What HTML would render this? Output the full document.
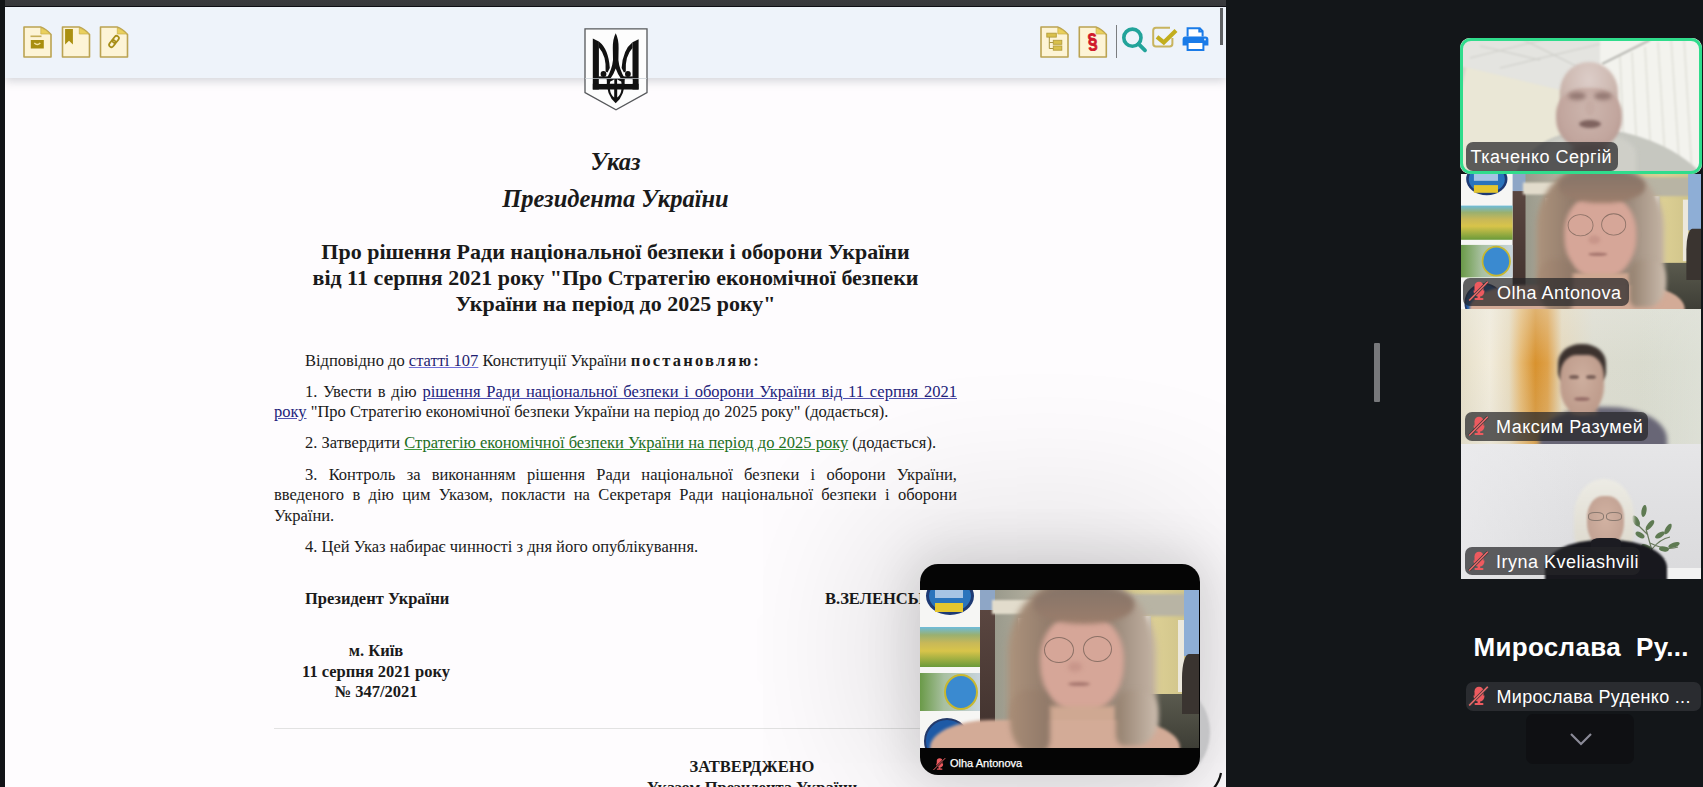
<!DOCTYPE html>
<html><head><meta charset="utf-8">
<style>
*{box-sizing:border-box;margin:0;padding:0}
html,body{width:1703px;height:787px;overflow:hidden;background:#131619;font-family:"Liberation Sans",sans-serif}
.abs{position:absolute}
#topbar{left:0;top:0;width:1226px;height:7px;background:linear-gradient(180deg,#3a3b3e 0,#37383b 5.5px,#101016 6px,#0c0c12 7px)}
#leftstrip{left:0;top:0;width:5px;height:787px;background:#121417}
#doc{left:5px;top:7px;width:1221px;height:780px;background:#fefcfe;overflow:hidden}
#toolbar{left:0;top:0;width:1221px;height:71px;background:#eef3fa;box-shadow:0 3px 9px rgba(120,130,140,.32)}
.serif{font-family:"Liberation Serif",serif;color:#1a1a1a}
.t{position:absolute;white-space:nowrap}
#scroll{left:1215px;top:1px;width:3px;height:37px;background:#5d5f62}

.it{font-style:italic;font-weight:bold;font-size:24.5px;line-height:30px}
.ti{font-weight:bold;font-size:22px;line-height:26px}
.bd{font-size:16.5px;line-height:20px}
.b{font-weight:bold}
.j{text-align:justify;text-align-last:justify;white-space:normal}
.sp{letter-spacing:2.2px}
.l1{color:#1e1e70;text-decoration:underline;text-decoration-color:#7070d8}
.l2{color:#22227a;text-decoration:underline;text-decoration-color:#5050b0}
.l3{color:#1d6e1d;text-decoration:underline;text-decoration-color:#3c9a3c}

.tile{position:absolute;overflow:hidden}
.tile div{position:absolute}
.bl{filter:blur(2px)}
.lab{position:absolute;background:rgba(38,38,40,.72);border-radius:7px;color:#fff;font-family:"Liberation Sans",sans-serif;font-size:18px;line-height:28px;padding-top:1px;white-space:nowrap;letter-spacing:.5px}
.mic{position:absolute}
</style></head><body>
<div id="topbar" class="abs"></div>
<div id="leftstrip" class="abs"></div>
<div id="doc" class="abs">
  <div id="toolbar" class="abs"></div>
  <div id="scroll" class="abs"></div>
</div>
<div id="icons"><svg class="abs" style="left:0;top:0" width="1231" height="80" viewBox="0 0 1231 80"><g transform="translate(23,26)">
<path d="M1,1 H17.6 Q23,2.8 28,8.6 V31 H1 Z" fill="#fdf4d6" stroke="#bba352" stroke-width="1.6" stroke-linejoin="round"/>
<path d="M17.8,1.8 V8 H27.2 Q23,3.4 17.8,1.8 Z" fill="#ead05c" stroke="#c9b04a" stroke-width="0.7"/>
<rect x="7.5" y="9.5" width="11" height="1.6" fill="#b89e3a" opacity=".8"/>
<rect x="7.8" y="14" width="13" height="8.5" fill="#a88e10"/>
<path d="M11.3,17 Q14.3,20 17.3,17" stroke="#f4e3a0" stroke-width="1.4" fill="none"/></g><g transform="translate(61.5,26)">
<path d="M1,1 H17.6 Q23,2.8 28,8.6 V31 H1 Z" fill="#fdf4d6" stroke="#bba352" stroke-width="1.6" stroke-linejoin="round"/>
<path d="M17.8,1.8 V8 H27.2 Q23,3.4 17.8,1.8 Z" fill="#ead05c" stroke="#c9b04a" stroke-width="0.7"/>
<path d="M3.6,3 H11.4 V18.6 L7.5,14.8 L3.6,18.6 Z" fill="#ab9010"/></g><g transform="translate(99.5,26)">
<path d="M1,1 H17.6 Q23,2.8 28,8.6 V31 H1 Z" fill="#fdf4d6" stroke="#bba352" stroke-width="1.6" stroke-linejoin="round"/>
<path d="M17.8,1.8 V8 H27.2 Q23,3.4 17.8,1.8 Z" fill="#ead05c" stroke="#c9b04a" stroke-width="0.7"/>
<g transform="rotate(-52 14.5 15.5)" fill="none" stroke="#a88e18" stroke-width="1.7">
<rect x="8" y="13.2" width="7.6" height="4.6" rx="2.3"/><rect x="13.4" y="13.2" width="7.6" height="4.6" rx="2.3"/></g></g><g transform="translate(1040,26)">
<path d="M1,1 H17.6 Q23,2.8 28,8.6 V31 H1 Z" fill="#fdf4d6" stroke="#bba352" stroke-width="1.6" stroke-linejoin="round"/>
<path d="M17.8,1.8 V8 H27.2 Q23,3.4 17.8,1.8 Z" fill="#ead05c" stroke="#c9b04a" stroke-width="0.7"/>
<rect x="6.8" y="7.2" width="9.5" height="3.9" fill="#d9c04a" stroke="#b59d3c" stroke-width="0.9"/>
<path d="M9.3,11 V22.5 H13.5 M9.3,16.5 H13.5" stroke="#a89440" stroke-width="1" fill="none"/>
<rect x="13.3" y="14.3" width="8.5" height="4" fill="#d9c04a" stroke="#b59d3c" stroke-width="0.9"/>
<rect x="13.3" y="20" width="8.5" height="4.2" fill="#d9c04a" stroke="#b59d3c" stroke-width="0.9"/></g><g transform="translate(1078.3,26)">
<path d="M1,1 H17.6 Q23,2.8 28,8.6 V31 H1 Z" fill="#fdf4d6" stroke="#bba352" stroke-width="1.6" stroke-linejoin="round"/>
<path d="M17.8,1.8 V8 H27.2 Q23,3.4 17.8,1.8 Z" fill="#ead05c" stroke="#c9b04a" stroke-width="0.7"/>
<g transform="translate(14.3 16) rotate(-6) scale(0.9 1.12)"><text x="0" y="5.6" font-family="Liberation Sans" font-weight="bold" font-size="19" fill="#d0182a" stroke="#d0182a" stroke-width="0.7" text-anchor="middle">§</text></g></g><rect x="1116" y="25" width="1" height="33" fill="#7b7d80"/><circle cx="1132.4" cy="37.7" r="8.6" fill="none" stroke="#22a39a" stroke-width="3.6"/><path d="M1138.5,43.8 L1145,50.3" stroke="#22a39a" stroke-width="3.8" stroke-linecap="round"/><path d="M1170,27.8 H1156 Q1153.2,27.8 1153.2,30.6 V43.8 Q1153.2,46.6 1156,46.6 H1169.6 Q1172.4,46.6 1172.4,43.8 V38" fill="none" stroke="#c8b45e" stroke-width="2"/><path d="M1157,36.8 L1163.8,42.4 L1176,30.6" fill="none" stroke="#c2ae1e" stroke-width="4.2" stroke-linejoin="miter"/><path d="M1187.6,36.5 V28.3 H1199.8 L1202.6,31.1 V36.5" fill="#fff" stroke="#1a7be8" stroke-width="2"/>
<path d="M1199.3,28 V31.6 H1203" fill="none" stroke="#1a7be8" stroke-width="2"/>
<path d="M1185.4,36.4 H1205.4 Q1208.4,36.4 1208.4,39.4 V45.6 H1203.6 V43 H1187.6 V45.6 H1182.6 V39.4 Q1182.6,36.4 1185.4,36.4 Z" fill="#1a7be8"/>
<path d="M1187.6,43 V50 H1203.4 V43" fill="#fff" stroke="#1a7be8" stroke-width="2"/>
<circle cx="1205" cy="39.5" r="0.9" fill="#e6f0ff"/></svg></div>
<div id="arms"><svg class="abs" style="left:578px;top:22px" width="76" height="94" viewBox="0 0 76 94">
<path d="M7,6.8 H69 V70.5 L38,87.8 L7,70.5 Z" fill="#fdfdfd" stroke="#56585b" stroke-width="1.3"/>
<g fill="#111">
<path d="M14.8,16.6 L20.9,19.6 V67.5 H14.8 Z"/>
<path d="M60.6,17.2 L54.5,20.2 V67.5 H60.6 Z"/>
<rect x="14.8" y="61.8" width="45.8" height="5.7"/>
<path d="M37.7,11.3 Q40.7,17 40.6,26 L40.4,38 Q41.3,47 46.5,56 L43.5,57.5 Q39.5,52 37.7,46.5 Q35.9,52 31.9,57.5 L28.9,56 Q34.1,47 35,38 L34.8,26 Q34.7,17 37.7,11.3 Z"/>
<path d="M20.9,19.6 Q30.5,27 31.8,46 L29.5,50.5 L27.6,49.5 Q28.6,34 20.9,25.5 Z"/>
<path d="M54.5,20.2 Q44.9,27.6 43.6,46 L45.9,50.5 L47.8,49.5 Q46.8,34 54.5,26 Z"/>
<circle cx="25.5" cy="52" r="2.9"/><circle cx="49.9" cy="52" r="2.9"/>
<rect x="20.5" y="54.4" width="10" height="2.9"/><rect x="44.9" y="54.4" width="10" height="2.9"/>
<path d="M28.6,56 H46.8 Q47.5,73 37.7,81.3 Q27.9,73 28.6,56 Z"/>
</g>
<g fill="#fdfdfd">
<path d="M32.2,59.5 Q34.5,58.7 36.3,57.2 V61.8 H31.8 Z"/>
<path d="M43.2,59.5 Q40.9,58.7 39.1,57.2 V61.8 H43.6 Z"/>
<path d="M32,67.5 H36.2 V75.5 Q32.4,72.5 32,67.5 Z"/>
<path d="M43.4,67.5 H39.2 V75.5 Q43,72.5 43.4,67.5 Z"/>
<rect x="20.9" y="57.3" width="7.5" height="4.5"/>
<rect x="47" y="57.3" width="7.5" height="4.5"/>
</g>
<rect x="7" y="56" width="62" height="0.9" fill="#c8ced4" opacity=".8"/>
</svg></div>
<div id="content" class="serif abs" style="left:0;top:0;width:1231px;height:787px">
<div class="t it" style="left:0;width:1231px;text-align:center;top:147px">Указ</div>
<div class="t it" style="left:0;width:1231px;text-align:center;top:183.5px">Президента України</div>
<div class="t ti" style="left:0;width:1231px;text-align:center;top:238.6px">Про рішення Ради національної безпеки і оборони України</div>
<div class="t ti" style="left:0;width:1231px;text-align:center;top:264.6px">від 11 серпня 2021 року "Про Стратегію економічної безпеки</div>
<div class="t ti" style="left:0;width:1231px;text-align:center;top:290.6px">України на період до 2025 року"</div>

<div class="t bd" style="left:305px;top:351px">Відповідно до <span class="l1">статті 107</span> Конституції України <b class="sp">постановляю:</b></div>
<div class="t bd j" style="left:305px;width:652px;top:382px">1. Увести в дію <span class="l2">рішення Ради національної безпеки і оборони України від 11 серпня 2021</span></div>
<div class="t bd" style="left:274px;top:402px"><span class="l2">року</span> "Про Стратегію економічної безпеки України на період до 2025 року" (додається).</div>
<div class="t bd" style="left:305px;top:433px">2. Затвердити <span class="l3">Стратегію економічної безпеки України на період до 2025 року</span> (додається).</div>
<div class="t bd j" style="left:305px;width:652px;top:465px">3. Контроль за виконанням рішення Ради національної безпеки і оборони України,</div>
<div class="t bd j" style="left:274px;width:683px;top:485px">введеного в дію цим Указом, покласти на Секретаря Ради національної безпеки і оборони</div>
<div class="t bd" style="left:274px;top:505.5px">України.</div>
<div class="t bd" style="left:305px;top:537px">4. Цей Указ набирає чинності з дня його опублікування.</div>

<div class="t bd b" style="left:305px;top:589px">Президент України</div>
<div class="t bd b" style="left:825px;top:589px">В.ЗЕЛЕНСЬКИЙ</div>
<div class="t bd b" style="left:276px;width:200px;text-align:center;top:640.5px">м. Київ</div>
<div class="t bd b" style="left:276px;width:200px;text-align:center;top:661.5px">11 серпня 2021 року</div>
<div class="t bd b" style="left:276px;width:200px;text-align:center;top:681.5px">№ 347/2021</div>
<div class="abs" style="left:274px;top:728px;width:683px;height:1px;background:#e2e2e2"></div>
<div class="t bd b" style="left:552px;width:400px;text-align:center;top:756.8px">ЗАТВЕРДЖЕНО</div>
<div class="t bd b" style="left:552px;width:400px;text-align:center;top:778px">Указом Президента України</div>
</div>


<div id="float">
<div class="abs" style="left:5px;top:7px;width:1221px;height:780px;overflow:hidden"><div class="abs" style="left:915px;top:557px;width:280px;height:211px;border-radius:18px;box-shadow:-20px -20px 160px 30px rgba(0,0,0,.12), 0 0 50px 8px rgba(0,0,0,.12)"></div></div>
<div class="abs" style="left:1140px;top:688px;width:70px;height:88px;border-radius:50%;background:#c4c4c6;filter:blur(1px)"></div>
<div class="tile" style="left:920px;top:564px;width:280px;height:211px;border-radius:18px;background:#050505">
  <div style="left:0;top:26px;width:279px;height:158px;overflow:hidden;background:#b8b098">
    <div style="left:59px;top:0;width:18px;height:22px;background:#8ea6c6"></div>
    <div style="left:59px;top:20px;width:18px;height:138px;background:linear-gradient(180deg,#5a4640,#3e302c)"></div>
    <div style="left:75px;top:0;width:140px;height:158px;background:linear-gradient(90deg,#9a9a8c,#b4b0a0 30%,#c8c2a8 70%)"></div>
    <div style="left:72px;top:10px;width:60px;height:14px;background:#e2dccc;filter:blur(1px)"></div>
    <div style="left:203px;top:0;width:64px;height:105px;background:linear-gradient(90deg,#d2c68e,#dccf94 50%,#d0c48a)"></div>
    <div style="left:150px;top:4px;width:120px;height:22px;background:#b8b4a4;filter:blur(1.5px)"></div>
    <div style="left:222px;top:26px;width:9px;height:76px;background:linear-gradient(90deg,#d8d4c8,#f6f2ea,#c8c4b8)"></div>
    <div style="left:258px;top:30px;width:6px;height:72px;background:#ece8dc"></div>
    <div style="left:98px;top:28px;width:9px;height:62px;background:linear-gradient(90deg,#d8d4c8,#f6f2ea,#c8c4b8)"></div>
    <div style="left:200px;top:104px;width:79px;height:54px;background:linear-gradient(180deg,#5a5a4e,#3e3e36)"></div>
    <div style="left:264px;top:0;width:15px;height:66px;background:#8eaed6"></div>
    <div style="left:262px;top:64px;width:17px;height:60px;border-radius:40% 0 0 0;background:#3a3430"></div>
    <div style="left:88px;top:-14px;width:148px;height:190px;border-radius:50% 50% 12% 12% / 40% 40% 12% 12%;background:linear-gradient(90deg,#ad937c,#927c6c 28%,#8a786a 60%,#c4b4a4);filter:blur(3px)"></div>
    <div style="left:120px;top:24px;width:84px;height:100px;border-radius:44% 44% 50% 50%;background:#d6a698;filter:blur(2.5px)"></div>
    <div style="left:114px;top:-2px;width:100px;height:36px;border-radius:40% 40% 50% 50%;background:linear-gradient(180deg,#857468,#9c7e6c);filter:blur(2.5px)"></div>
    <div style="left:124px;top:47px;width:30px;height:26px;border-radius:50%;border:1.3px solid rgba(100,84,76,.65)"></div>
    <div style="left:163px;top:46px;width:29px;height:26px;border-radius:50%;border:1.3px solid rgba(100,84,76,.65)"></div>
    <div style="left:148px;top:72px;width:14px;height:10px;border-radius:50%;background:#c8968a;filter:blur(2px)"></div>
    <div style="left:148px;top:92px;width:22px;height:4px;border-radius:50%;background:#a87870;filter:blur(1.5px)"></div>
    <div style="left:126px;top:116px;width:70px;height:30px;background:#cfa892;filter:blur(2px)"></div>
        <div style="left:0;top:0;width:60px;height:158px;background:#f6f6f4"></div>
    <div style="left:6px;top:-13px;width:48px;height:38px;border-radius:50%;background:#2a74bc;border:3px solid #1e3a74"></div>
    <div style="left:15px;top:-4px;width:28px;height:12px;background:#a6c4e4"></div>
    <div style="left:15px;top:13px;width:28px;height:9px;background:#e4c62e"></div>
    <div style="left:0;top:37px;width:60px;height:40px;background:linear-gradient(180deg,#6ebcda 0,#9ab070 20%,#c8b858 40%,#d8c44a 60%,#6a9a3a 100%)"></div>
    <div style="left:0;top:83px;width:60px;height:38px;background:linear-gradient(90deg,#6a9a48,#a8c0a0 40%,#c8d4dc)"></div>
    <div style="left:24px;top:84px;width:34px;height:36px;border-radius:50%;background:#3a8ad0;border:2px solid #c8b830"></div>
    <div style="left:4px;top:128px;width:46px;height:46px;border-radius:50%;background:#1e5aa6;border:2px solid #243a6a"></div>
    <div style="left:10px;top:130px;width:250px;height:70px;border-radius:60px 60px 0 0 / 28px 28px 0 0;background:#d3ab97;filter:blur(1.5px)"></div>
    <div style="left:90px;top:100px;width:40px;height:62px;border-radius:40% 30% 20% 50%;background:linear-gradient(90deg,#a88c76,#8f7868);filter:blur(2.5px)"></div>
    <div style="left:196px;top:100px;width:42px;height:56px;border-radius:30% 40% 50% 20%;background:linear-gradient(90deg,#94806e,#cbbcae);filter:blur(2.5px)"></div>
  </div>
  <svg style="position:absolute;left:12px;top:193px" width="14" height="14" viewBox="0 0 22 20">
<g filter="url(#mb)"><rect x="7.5" y="0.8" width="9" height="12.5" rx="4.5" fill="#ee5a5e"/>
<path d="M6.5,9.5 Q6.5,15.5 12,15.5 Q17.5,15.5 17.5,9.5 Z" fill="#ee5a5e"/>
<rect x="10.6" y="15" width="2.6" height="3" fill="#ee5a5e"/><rect x="7.5" y="17" width="9" height="2" rx="1" fill="#ee5a5e"/>
<path d="M2.2,19.5 L20.8,0.8" stroke="#050505" stroke-width="3"/><path d="M2.2,19.5 L20.8,0.8" stroke="#ee6a6c" stroke-width="1.5"/></g></svg>
  <div style="left:30px;top:191.5px;color:#fff;font:11px/14px 'Liberation Sans',sans-serif;white-space:nowrap;letter-spacing:0;-webkit-text-stroke:0.25px #fff">Olha Antonova</div>
</div>
<svg class="abs" style="left:1206px;top:768px" width="20" height="20" viewBox="0 0 20 20"><path d="M15,5 Q13.5,13 8,20" fill="none" stroke="#111" stroke-width="2.2"/></svg>
</div>
<svg width="0" height="0" style="position:absolute"><defs><filter id="mb" x="-20%" y="-20%" width="140%" height="140%"><feGaussianBlur stdDeviation="0.35"/></filter></defs></svg>
<div id="gallery">
<!-- tile 1 -->
<div class="tile" style="left:1460px;top:38px;width:242px;height:136px;border-radius:10px;background:#e4e2d6">
  <svg style="position:absolute;left:0;top:0;filter:blur(0.8px)" width="242" height="136" viewBox="0 0 242 136">
    <rect x="0" y="0" width="242" height="136" fill="#e6e3d0"/>
    <path d="M0,0 H150 L150,40 L100,52 L0,28 Z" fill="#e4e4e0"/>
    <path d="M0,28 L100,52 L100,136 L0,136 Z" fill="#eae7d6"/>
    <path d="M0,28 L6,30 L0,60 Z" fill="#d6d4cc"/>
    <path d="M100,52 L150,40 L150,136 L100,136 Z" fill="#dedac8"/>
    <path d="M20,8 L80,22 M60,0 L120,30 M10,20 L90,0 M40,30 L140,6" stroke="#cfcfca" stroke-width="1.2"/>
    <path d="M140,0 H242 V136 H140 Z" fill="#f3f3ee"/>
    <path d="M142,26 L190,2" stroke="#a8a8a2" stroke-width="1.8"/>
    <g stroke="#e0e0d8" stroke-width="1.5">
      <path d="M160,18 L165,136 M172,14 L178,136 M185,9 L192,136 M198,4 L206,136 M211,0 L220,136 M224,0 L232,136"/>
    </g>
    <path d="M55,136 Q70,104 105,96 Q140,88 170,96 Q215,108 242,136 Z" fill="#c6c7c0"/>
    <path d="M120,108 L140,124 L160,104" fill="none" stroke="#9c9c96" stroke-width="2"/>
  </svg>
  <div style="left:84px;top:96px;width:92px;height:50px;border-radius:40% 40% 0 0;background:#cfcfc8;filter:blur(2px)"></div>
  <div style="left:100px;top:24px;width:58px;height:60px;border-radius:50% 50% 40% 40%;background:radial-gradient(ellipse at 50% 30%,#dccdc8 0,#cdb8b0 60%,#bca49c 100%);filter:blur(1.6px)"></div>
  <div style="left:96px;top:50px;width:66px;height:62px;border-radius:42% 42% 50% 50%;background:radial-gradient(ellipse at 50% 35%,#cdb6ae 0,#c2a69e 60%,#ad9088 100%);filter:blur(1.8px)"></div>
  <div style="left:108px;top:54px;width:18px;height:8px;border-radius:50%;background:#957a74;filter:blur(2px)"></div>
  <div style="left:134px;top:54px;width:18px;height:8px;border-radius:50%;background:#957a74;filter:blur(2px)"></div>
  <div style="left:125px;top:62px;width:10px;height:16px;border-radius:50%;background:#c6aca4;filter:blur(1.5px)"></div>
  <div style="left:119px;top:82px;width:22px;height:8px;border-radius:50%;background:#7e625e;filter:blur(1.6px)"></div>
  <div style="left:111px;top:106px;width:38px;height:12px;border-radius:50%;background:#a48a82;filter:blur(2.5px)"></div>
</div>
<div class="lab" style="left:1465.5px;top:141.5px;width:152.5px;height:29.5px;padding-left:5px;line-height:29px">Ткаченко Сергій</div>
<div class="abs" style="left:1459.5px;top:37.5px;width:242.5px;height:136.5px;border:3px solid #30dc8c;border-radius:11px"></div>

<!-- tile 2 -->
<div class="tile" style="left:1461px;top:174px;width:240px;height:135px;background:#b8b098">
<div style="left:0;top:0;width:279px;height:158px;transform:scale(0.8602,0.8544);transform-origin:0 0;overflow:hidden;background:#b8b098">
    <div style="left:59px;top:0;width:18px;height:22px;background:#8ea6c6"></div>
    <div style="left:59px;top:20px;width:18px;height:138px;background:linear-gradient(180deg,#5a4640,#3e302c)"></div>
    <div style="left:75px;top:0;width:140px;height:158px;background:linear-gradient(90deg,#9a9a8c,#b4b0a0 30%,#c8c2a8 70%)"></div>
    <div style="left:72px;top:10px;width:60px;height:14px;background:#e2dccc;filter:blur(1px)"></div>
    <div style="left:203px;top:0;width:64px;height:105px;background:linear-gradient(90deg,#d2c68e,#dccf94 50%,#d0c48a)"></div>
    <div style="left:150px;top:4px;width:120px;height:22px;background:#b8b4a4;filter:blur(1.5px)"></div>
    <div style="left:222px;top:26px;width:9px;height:76px;background:linear-gradient(90deg,#d8d4c8,#f6f2ea,#c8c4b8)"></div>
    <div style="left:258px;top:30px;width:6px;height:72px;background:#ece8dc"></div>
    <div style="left:98px;top:28px;width:9px;height:62px;background:linear-gradient(90deg,#d8d4c8,#f6f2ea,#c8c4b8)"></div>
    <div style="left:200px;top:104px;width:79px;height:54px;background:linear-gradient(180deg,#5a5a4e,#3e3e36)"></div>
    <div style="left:264px;top:0;width:15px;height:66px;background:#8eaed6"></div>
    <div style="left:262px;top:64px;width:17px;height:60px;border-radius:40% 0 0 0;background:#3a3430"></div>
    <div style="left:88px;top:-14px;width:148px;height:190px;border-radius:50% 50% 12% 12% / 40% 40% 12% 12%;background:linear-gradient(90deg,#ad937c,#927c6c 28%,#8a786a 60%,#c4b4a4);filter:blur(3px)"></div>
    <div style="left:120px;top:24px;width:84px;height:100px;border-radius:44% 44% 50% 50%;background:#d6a698;filter:blur(2.5px)"></div>
    <div style="left:114px;top:-2px;width:100px;height:36px;border-radius:40% 40% 50% 50%;background:linear-gradient(180deg,#857468,#9c7e6c);filter:blur(2.5px)"></div>
    <div style="left:124px;top:47px;width:30px;height:26px;border-radius:50%;border:1.3px solid rgba(100,84,76,.65)"></div>
    <div style="left:163px;top:46px;width:29px;height:26px;border-radius:50%;border:1.3px solid rgba(100,84,76,.65)"></div>
    <div style="left:148px;top:72px;width:14px;height:10px;border-radius:50%;background:#c8968a;filter:blur(2px)"></div>
    <div style="left:148px;top:92px;width:22px;height:4px;border-radius:50%;background:#a87870;filter:blur(1.5px)"></div>
    <div style="left:126px;top:116px;width:70px;height:30px;background:#cfa892;filter:blur(2px)"></div>
        <div style="left:0;top:0;width:60px;height:158px;background:#f6f6f4"></div>
    <div style="left:6px;top:-13px;width:48px;height:38px;border-radius:50%;background:#2a74bc;border:3px solid #1e3a74"></div>
    <div style="left:15px;top:-4px;width:28px;height:12px;background:#a6c4e4"></div>
    <div style="left:15px;top:13px;width:28px;height:9px;background:#e4c62e"></div>
    <div style="left:0;top:37px;width:60px;height:40px;background:linear-gradient(180deg,#6ebcda 0,#9ab070 20%,#c8b858 40%,#d8c44a 60%,#6a9a3a 100%)"></div>
    <div style="left:0;top:83px;width:60px;height:38px;background:linear-gradient(90deg,#6a9a48,#a8c0a0 40%,#c8d4dc)"></div>
    <div style="left:24px;top:84px;width:34px;height:36px;border-radius:50%;background:#3a8ad0;border:2px solid #c8b830"></div>
    <div style="left:4px;top:128px;width:46px;height:46px;border-radius:50%;background:#1e5aa6;border:2px solid #243a6a"></div>
    <div style="left:10px;top:130px;width:250px;height:70px;border-radius:60px 60px 0 0 / 28px 28px 0 0;background:#d3ab97;filter:blur(1.5px)"></div>
    <div style="left:90px;top:100px;width:40px;height:62px;border-radius:40% 30% 20% 50%;background:linear-gradient(90deg,#a88c76,#8f7868);filter:blur(2.5px)"></div>
    <div style="left:196px;top:100px;width:42px;height:56px;border-radius:30% 40% 50% 20%;background:linear-gradient(90deg,#94806e,#cbbcae);filter:blur(2.5px)"></div>
  </div>
</div>
<div class="lab" style="left:1463px;top:277.5px;width:166px;height:28px;padding-left:34px;line-height:28px">Olha Antonova</div>
<svg class="mic" style="left:1467px;top:281px" width="22" height="20" viewBox="0 0 22 20">
<g filter="url(#mb)"><rect x="7.5" y="0.8" width="9" height="12.5" rx="4.5" fill="#ee5a5e"/>
<path d="M6.5,9.5 Q6.5,15.5 12,15.5 Q17.5,15.5 17.5,9.5 Z" fill="#ee5a5e"/>
<rect x="10.6" y="15" width="2.6" height="3" fill="#ee5a5e"/><rect x="7.5" y="17" width="9" height="2" rx="1" fill="#ee5a5e"/>
<path d="M2.2,19.5 L20.8,0.8" stroke="#3a3a3a" stroke-width="3"/><path d="M2.2,19.5 L20.8,0.8" stroke="#ee6a6c" stroke-width="1.5"/></g>
</svg>

<!-- tile 3 -->
<div class="tile" style="left:1461px;top:309px;width:240px;height:134.5px;background:#d6d8ca">
  <div style="left:0;top:0;width:240px;height:135px;background:linear-gradient(90deg,#e6dfc8 0,#f2ecdc 12%,#e8dcc0 20%,#e6b870 25%,#d8922e 31%,#dea048 36%,#e4d8bc 42%,#dcdcd0 55%,#d6dacd 100%)"></div>
  <div style="left:0;top:0;width:240px;height:135px;background:linear-gradient(180deg,rgba(236,236,230,.35) 0,rgba(236,236,230,0) 40%,rgba(210,210,200,.25) 100%)"></div>
  <div style="left:180px;top:0;width:60px;height:135px;background:linear-gradient(90deg,rgba(226,228,220,0),rgba(226,228,220,.6))"></div>
  <div style="left:78px;top:98px;width:128px;height:70px;border-radius:46% 46% 0 0;background:#686676;filter:blur(2px)"></div>
  <div style="left:110px;top:88px;width:26px;height:18px;background:#b09484;filter:blur(2px)"></div>
  <div style="left:97px;top:35px;width:48px;height:40px;border-radius:48% 48% 30% 30%;background:#3c322e;filter:blur(1.5px)"></div>
  <div style="left:99px;top:46px;width:44px;height:60px;border-radius:36% 36% 48% 48%;background:radial-gradient(ellipse at 50% 40%,#cdae9e,#b89484);filter:blur(1.5px)"></div>
  <div style="left:108px;top:66px;width:10px;height:4px;border-radius:50%;background:#7a6058;filter:blur(1px)"></div>
  <div style="left:125px;top:66px;width:10px;height:4px;border-radius:50%;background:#7a6058;filter:blur(1px)"></div>
  <div style="left:113px;top:88px;width:16px;height:4px;border-radius:50%;background:#98706a;filter:blur(1px)"></div>
</div>
<div class="lab" style="left:1465px;top:412px;width:183px;height:28.5px;padding-left:31px;line-height:28px">Максим Разумей</div>
<svg class="mic" style="left:1467px;top:416px" width="22" height="20" viewBox="0 0 22 20">
<g filter="url(#mb)"><rect x="7.5" y="0.8" width="9" height="12.5" rx="4.5" fill="#ee5a5e"/>
<path d="M6.5,9.5 Q6.5,15.5 12,15.5 Q17.5,15.5 17.5,9.5 Z" fill="#ee5a5e"/>
<rect x="10.6" y="15" width="2.6" height="3" fill="#ee5a5e"/><rect x="7.5" y="17" width="9" height="2" rx="1" fill="#ee5a5e"/>
<path d="M2.2,19.5 L20.8,0.8" stroke="#3a3a3a" stroke-width="3"/><path d="M2.2,19.5 L20.8,0.8" stroke="#ee6a6c" stroke-width="1.5"/></g>
</svg>

<!-- tile 4 -->
<div class="tile" style="left:1461px;top:444px;width:240px;height:135px;background:#dcdcde">
  <div style="left:0;top:0;width:240px;height:135px;background:linear-gradient(180deg,#e6e6e8 0,#e0e0e2 45%,#dadadc 100%)"></div>
  <div style="left:0;top:0;width:120px;height:135px;background:linear-gradient(90deg,rgba(236,236,238,.7),rgba(236,236,238,0))"></div>
  <div style="left:150px;top:124px;width:90px;height:11px;background:#f2f2f2"></div>
  <svg style="position:absolute;left:165px;top:55px;filter:blur(0.6px)" width="60" height="75" viewBox="0 0 60 75">
    <path d="M30,70 Q26,50 20,30 M26,50 Q34,40 44,38 M22,36 Q16,30 10,24 M24,44 Q40,52 52,48" stroke="#6a7a5e" stroke-width="1.2" fill="none"/>
    <g fill="#5e7a52">
      <ellipse cx="10" cy="22" rx="3" ry="6" transform="rotate(-30 10 22)"/>
      <ellipse cx="18" cy="12" rx="2.5" ry="6" transform="rotate(10 18 12)"/>
      <ellipse cx="24" cy="26" rx="2.5" ry="6" transform="rotate(40 24 26)"/>
      <ellipse cx="14" cy="36" rx="2.5" ry="5" transform="rotate(-60 14 36)"/>
      <ellipse cx="34" cy="36" rx="2.5" ry="5.5" transform="rotate(60 34 36)"/>
      <ellipse cx="42" cy="30" rx="2.5" ry="6" transform="rotate(30 42 30)"/>
      <ellipse cx="48" cy="46" rx="2.5" ry="6" transform="rotate(70 48 46)"/>
      <ellipse cx="38" cy="50" rx="2.5" ry="5" transform="rotate(100 38 50)"/>
      <ellipse cx="20" cy="48" rx="2.5" ry="5" transform="rotate(-70 20 48)"/>
    </g>
    <path d="M24,60 H40 L38,75 H26 Z" fill="#f0f0f0"/>
  </svg>
  <div style="left:113px;top:35px;width:60px;height:76px;border-radius:48% 48% 30% 30%;background:linear-gradient(180deg,#ecebe4,#dcd8cc);filter:blur(1.5px)"></div>
  <div style="left:126px;top:52px;width:37px;height:52px;border-radius:42% 42% 48% 48%;background:radial-gradient(ellipse at 50% 45%,#d2b2a2,#bc9c8e);filter:blur(1.2px)"></div>
  <div style="left:127px;top:68px;width:16px;height:9px;border-radius:40%;border:1px solid #8a7a70"></div>
  <div style="left:145px;top:68px;width:16px;height:9px;border-radius:40%;border:1px solid #8a7a70"></div>
  <div style="left:84px;top:96px;width:122px;height:60px;border-radius:46% 46% 0 0;background:#18181e;filter:blur(1px)"></div>
  <div style="left:130px;top:94px;width:30px;height:14px;border-radius:30%;background:#1c1c22"></div>
</div>
<div class="lab" style="left:1465px;top:547px;width:175px;height:28px;padding-left:31px;line-height:28px">Iryna Kveliashvili</div>
<svg class="mic" style="left:1467px;top:551px" width="22" height="20" viewBox="0 0 22 20">
<g filter="url(#mb)"><rect x="7.5" y="0.8" width="9" height="12.5" rx="4.5" fill="#ee5a5e"/>
<path d="M6.5,9.5 Q6.5,15.5 12,15.5 Q17.5,15.5 17.5,9.5 Z" fill="#ee5a5e"/>
<rect x="10.6" y="15" width="2.6" height="3" fill="#ee5a5e"/><rect x="7.5" y="17" width="9" height="2" rx="1" fill="#ee5a5e"/>
<path d="M2.2,19.5 L20.8,0.8" stroke="#3a3a3a" stroke-width="3"/><path d="M2.2,19.5 L20.8,0.8" stroke="#ee6a6c" stroke-width="1.5"/></g>
</svg>

<div class="abs" style="left:1473.5px;top:630px;color:#fff;font:bold 26px/34px 'Liberation Sans',sans-serif;white-space:nowrap;letter-spacing:.32px">Мирослава&nbsp; Ру...</div>
<div class="lab" style="left:1465.5px;top:682px;width:235px;height:28.5px;padding-left:31px;line-height:28px;background:#2a2c30;letter-spacing:.3px">Мирослава Руденко ...</div>
<svg class="mic" style="left:1467px;top:686px" width="22" height="20" viewBox="0 0 22 20">
<g filter="url(#mb)"><rect x="7.5" y="0.8" width="9" height="12.5" rx="4.5" fill="#ee5a5e"/>
<path d="M6.5,9.5 Q6.5,15.5 12,15.5 Q17.5,15.5 17.5,9.5 Z" fill="#ee5a5e"/>
<rect x="10.6" y="15" width="2.6" height="3" fill="#ee5a5e"/><rect x="7.5" y="17" width="9" height="2" rx="1" fill="#ee5a5e"/>
<path d="M2.2,19.5 L20.8,0.8" stroke="#3a3a3a" stroke-width="3"/><path d="M2.2,19.5 L20.8,0.8" stroke="#ee6a6c" stroke-width="1.5"/></g>
</svg>
<div class="abs" style="left:1526px;top:714px;width:108px;height:50px;border-radius:7px;background:#0f1013"></div>
<svg class="abs" style="left:1568px;top:730px" width="26" height="18" viewBox="0 0 26 18"><path d="M3,4 L13,14 L23,4" fill="none" stroke="#8b8b98" stroke-width="2.2"/></svg>
<div class="abs" style="left:1374px;top:343px;width:6px;height:59px;background:#77787b;border-radius:1px"></div>
</div>
</body></html>
